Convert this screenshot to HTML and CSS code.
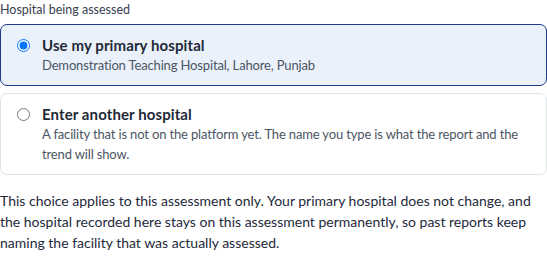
FILE: index.html
```html
<!DOCTYPE html>
<html lang="en">
  <head>
    <meta charset="UTF-8" />
    <meta name="viewport" content="width=device-width, initial-scale=1.0" />
    <title>Hospital being assessed</title>
    <link rel="stylesheet" href="styles.css">
  </head>
  <body>
    <div class="field">
      <div class="label">Hospital being assessed</div>
      <label class="option selected">
        <input type="radio" name="hospital" checked />
        <span class="text">
          <span class="title">Use my primary hospital</span>
          <span class="desc">Demonstration Teaching Hospital, Lahore, Punjab</span>
        </span>
      </label>
      <label class="option">
        <input type="radio" name="hospital" />
        <span class="text">
          <span class="title">Enter another hospital</span>
          <span class="desc">A facility that is not on the platform yet. The name you type is what the report and the trend will show.</span>
        </span>
      </label>
      <p class="note">This choice applies to this assessment only. Your primary hospital does not change, and the hospital recorded here stays on this assessment permanently, so past reports keep naming the facility that was actually assessed.</p>
    </div>
  </body>
</html>
```

FILE: styles.css
```css
body {
  margin: 0;
  padding: 0;
  background: #fff;
  font-family: Lato, "Noto Sans", sans-serif;
  color: #1f2937;
}
.field {
  width: 547px;
  display: flex;
  flex-direction: column;
}
.label {
  font-size: 12.5px;
  line-height: 16px;
  padding-top: 2px;
  margin-bottom: 6px;
  color: #374151;
}
.option {
  display: flex;
  gap: 12px;
  border: 1px solid #dfe3ea;
  border-radius: 7px;
  padding: 10px 12px 10px 16px;
  margin-bottom: 7px;
  background: #fff;
  cursor: pointer;
}
.option.selected {
  border-color: #1e3a8a;
  background: #eaf1fb;
}
.option input {
  margin: 4px 0 0 0;
  width: 13px;
  height: 13px;
}
.text {
  display: flex;
  flex-direction: column;
}
.title {
  font-weight: 700;
  font-size: 15px;
  line-height: 20px;
  letter-spacing: 0.1px;
  color: #1f2937;
}
.desc {
  font-size: 13px;
  line-height: 20px;
  letter-spacing: -0.15px;
  color: #4b5563;
}
.note {
  margin: 8px 0 0 0;
  padding-right: 12px;
  font-size: 14px;
  line-height: 21px;
  color: #1e293b;
}
```
